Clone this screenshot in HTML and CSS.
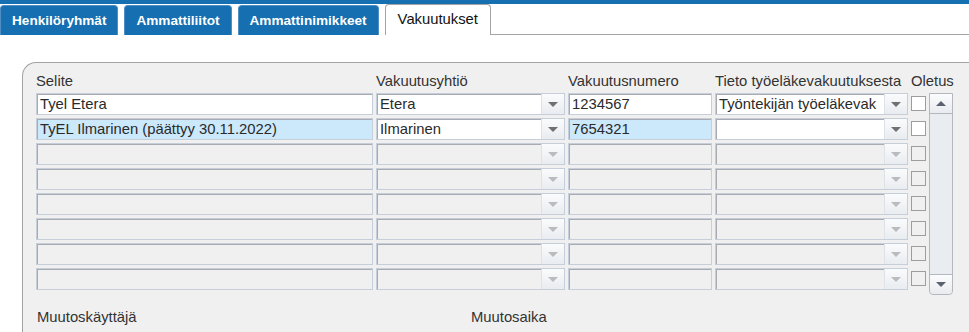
FILE: index.html
```html
<!DOCTYPE html>
<html lang="fi">
<head>
    <meta charset="UTF-8" />
    <title>Vakuutukset</title>
    <link rel="stylesheet" href="styles.css">
</head>
<body>
    <div class="top-line"></div>
    <nav class="tabs">
        <a class="tab">Henkilöryhmät</a>
        <a class="tab">Ammattiliitot</a>
        <a class="tab">Ammattinimikkeet</a>
        <a class="tab active">Vakuutukset</a>
        <div class="tab-rest"></div>
    </nav>

    <main class="content">
        <section class="panel">
            <div class="grid">
                <div class="head">Selite</div>
                <div class="head">Vakuutusyhtiö</div>
                <div class="head">Vakuutusnumero</div>
                <div class="head">Tieto työeläkevakuutuksesta</div>
                <div class="head">Oletus</div>
                <div class="head"></div>

                <!-- row 1 -->
                <div class="field">Tyel Etera</div>
                <div class="field combo"><span class="value">Etera</span><span class="drop"><i></i></span></div>
                <div class="field">1234567</div>
                <div class="field combo"><span class="value">Työntekijän työeläkevak</span><span class="drop"><i></i></span></div>
                <div class="check"></div>
                <div class="scrollbar">
                    <div class="sb-btn up"><i></i></div>
                    <div class="sb-track"></div>
                    <div class="sb-btn down"><i></i></div>
                </div>

                <!-- row 2 -->
                <div class="field selected">TyEL Ilmarinen (päättyy 30.11.2022)</div>
                <div class="field combo"><span class="value">Ilmarinen</span><span class="drop"><i></i></span></div>
                <div class="field selected">7654321</div>
                <div class="field combo"><span class="value"></span><span class="drop"><i></i></span></div>
                <div class="check"></div>

                <!-- empty rows -->
                <div class="field empty"></div>
                <div class="field combo empty"><span class="value"></span><span class="drop"><i></i></span></div>
                <div class="field empty"></div>
                <div class="field combo empty"><span class="value"></span><span class="drop"><i></i></span></div>
                <div class="check empty"></div>

                <div class="field empty"></div>
                <div class="field combo empty"><span class="value"></span><span class="drop"><i></i></span></div>
                <div class="field empty"></div>
                <div class="field combo empty"><span class="value"></span><span class="drop"><i></i></span></div>
                <div class="check empty"></div>

                <div class="field empty"></div>
                <div class="field combo empty"><span class="value"></span><span class="drop"><i></i></span></div>
                <div class="field empty"></div>
                <div class="field combo empty"><span class="value"></span><span class="drop"><i></i></span></div>
                <div class="check empty"></div>

                <div class="field empty"></div>
                <div class="field combo empty"><span class="value"></span><span class="drop"><i></i></span></div>
                <div class="field empty"></div>
                <div class="field combo empty"><span class="value"></span><span class="drop"><i></i></span></div>
                <div class="check empty"></div>

                <div class="field empty"></div>
                <div class="field combo empty"><span class="value"></span><span class="drop"><i></i></span></div>
                <div class="field empty"></div>
                <div class="field combo empty"><span class="value"></span><span class="drop"><i></i></span></div>
                <div class="check empty"></div>

                <div class="field empty"></div>
                <div class="field combo empty"><span class="value"></span><span class="drop"><i></i></span></div>
                <div class="field empty"></div>
                <div class="field combo empty"><span class="value"></span><span class="drop"><i></i></span></div>
                <div class="check empty"></div>
            </div>

            <div class="changes">
                <span class="change-user">Muutoskäyttäjä</span>
                <span>Muutosaika</span>
            </div>
        </section>
    </main>
</body>
</html>
```

FILE: styles.css
```css
:root {
    --tab-blue: #156fb1;
    --line-gray: #a3a3a3;
    --panel-bg: #f0f0f0;
    --field-border: #c5ced9;
    --field-shadow: #a8acb2;
    --selected-bg: #cce8fb;
    --text-color: #2a2a2a;
}
body {
    margin: 0;
    font-family: 'Liberation Sans', Arial, sans-serif;
    font-size: 14.8px;
    color: var(--text-color);
    background-color: #fff;
    overflow: hidden;
}
.top-line {
    height: 4px;
    background-color: var(--tab-blue);
}
.tabs {
    display: flex;
    align-items: flex-end;
    height: 31px;
}
.tab {
    display: flex;
    align-items: center;
    height: 30px;
    box-sizing: border-box;
    padding: 0 11px 1px 11px;
    margin-right: 6px;
    background-color: var(--tab-blue);
    border: 1px solid #4f8fc4;
    border-bottom: none;
    border-radius: 4px 4px 0 0;
    color: #fff;
    font-weight: 700;
    font-size: 13.6px;
    text-decoration: none;
}
.tab.active {
    height: 31px;
    padding: 0 12px 2px 12px;
    margin-right: 0;
    background-color: #fff;
    border-color: var(--line-gray);
    color: #111;
    font-weight: 400;
    font-size: 14.8px;
}
.tab-rest {
    flex: 1;
    align-self: stretch;
    border-bottom: 1px solid var(--line-gray);
}
.content {
    padding: 27px 0 0 22px;
}
.panel {
    background-color: var(--panel-bg);
    border: 1px solid var(--line-gray);
    border-right: none;
    border-bottom: none;
    border-top-left-radius: 14px;
    padding: 10px 0 0 13px;
    height: 259px;
}
.grid {
    display: grid;
    grid-template-columns: 337px 189px 144px 193px 15px 24px;
    grid-template-rows: 17px repeat(8, 22px);
    column-gap: 3px;
    row-gap: 3px;
}
.head {
    white-space: nowrap;
    color: #333;
    line-height: 16px;
}
.field {
    height: 22px;
    box-sizing: border-box;
    border: 1px solid var(--field-border);
    box-shadow: inset 1px 1px 0 var(--field-shadow);
    background-color: #fff;
    padding: 0 3px;
    line-height: 21px;
    white-space: nowrap;
    overflow: hidden;
}
.field.selected { background-color: var(--selected-bg); }
.field.empty { background-color: var(--panel-bg); }
.combo {
    display: flex;
    padding-right: 0;
}
.combo .value {
    flex: 1;
    overflow: hidden;
}
.drop {
    width: 22px;
    flex-shrink: 0;
    display: flex;
    align-items: center;
    justify-content: center;
    border-left: 1px solid #dde2e8;
    background: linear-gradient(#fafbfc, #e9ecf0);
}
.drop i {
    width: 0;
    height: 0;
    border-left: 5px solid transparent;
    border-right: 5px solid transparent;
    border-top: 5px solid #707070;
}
.empty .drop i { border-top-color: #b9bbbe; }
.check {
    width: 15px;
    height: 15px;
    margin-top: 3px;
    box-sizing: border-box;
    border: 1px solid #9d9d9d;
    background-color: #fff;
}
.check.empty { background-color: #f0f0f0; }
.scrollbar {
    grid-column: 6;
    grid-row: 2 / span 8;
    margin-bottom: -5px;
    display: flex;
    flex-direction: column;
    border: 1px solid #b4b8be;
    border-radius: 0 0 4px 4px;
    background-color: #e9edf2;
}
.sb-btn {
    height: 19px;
    display: flex;
    align-items: center;
    justify-content: center;
    background: linear-gradient(#fbfcfd, #e8ebef);
}
.sb-btn.up { border-bottom: 1px solid #b4b8be; }
.sb-btn.down {
    border-top: 1px solid #b4b8be;
    border-radius: 0 0 4px 4px;
}
.sb-track { flex: 1; }
.sb-btn i {
    width: 0;
    height: 0;
    border-left: 5px solid transparent;
    border-right: 5px solid transparent;
}
.sb-btn.up i { border-bottom: 5px solid #5b6170; }
.sb-btn.down i { border-top: 5px solid #5b6170; }
.changes {
    display: flex;
    margin-top: 19px;
    padding-left: 1px;
    color: #333;
}
.change-user {
    width: 434px;
}
```
